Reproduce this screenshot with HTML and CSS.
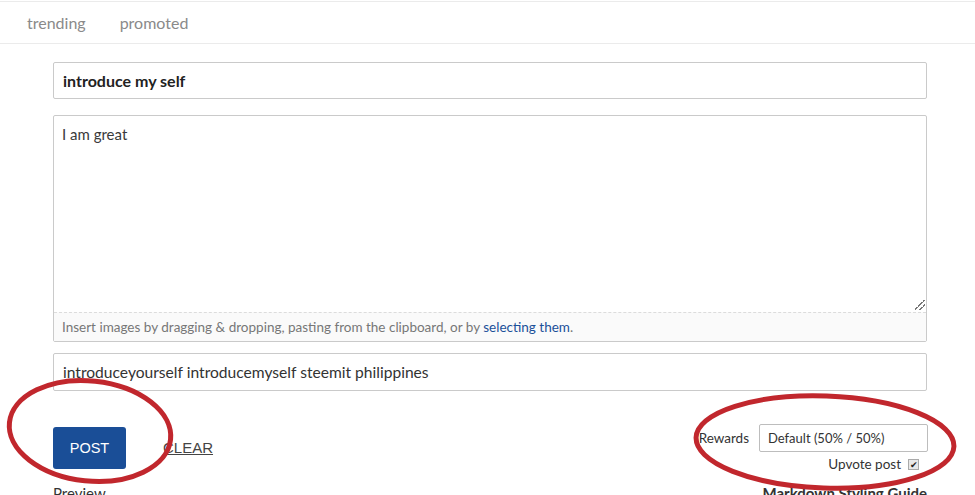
FILE: index.html
```html
<!DOCTYPE html>
<html lang="en">
  <head>
    <meta charset="UTF-8" />
    <title>Submit a story</title>
    <link rel="stylesheet" href="styles.css">
  </head>
  <body>
    <div class="topbar">
      <a class="navLink" href="#">trending</a>
      <a class="navLink" href="#">promoted</a>
    </div>

    <div class="editor">
      <div class="field titleField">introduce my self</div>

      <div class="bodyBox">
        <div class="bodyText">I am great</div>
        <div class="resizer"></div>
        <div class="hint">
          <p>Insert images by dragging &amp; dropping, pasting from the clipboard, or by <a href="#">selecting them</a>.</p>
        </div>
      </div>

      <div class="field tagField">introduceyourself introducemyself steemit philippines</div>

      <div class="actions">
        <div class="leftActions">
          <button class="postBtn">POST</button>
          <a class="clearLink" href="#">CLEAR</a>
        </div>
        <div class="rightActions">
          <div class="rewardsRow">
            <span class="rewardsLabel">Rewards</span>
            <div class="select">Default (50% / 50%)</div>
          </div>
          <div class="upvoteRow">
            Upvote post <span class="checkbox">&#10004;</span>
          </div>
        </div>
      </div>

      <div class="footRow">
        <span>Preview</span>
        <a class="guide" href="#">Markdown Styling Guide</a>
      </div>
    </div>

    <svg class="marks" width="975" height="495" viewBox="0 0 975 495">
      <ellipse cx="90" cy="431" rx="81" ry="50" transform="rotate(6 90 431)" />
      <ellipse cx="825" cy="442" rx="129" ry="46" transform="rotate(2 825 442)" />
    </svg>
  </body>
</html>
```

FILE: styles.css
```css
* {
  margin: 0px;
  padding: 0px;
  box-sizing: border-box;
}
body {
  font-family: Lato, "Liberation Sans", sans-serif;
  color: #333;
  background: #fff;
  width: 975px;
  height: 495px;
  overflow: hidden;
  position: relative;
}
a {
  text-decoration: none;
}

.topbar {
  margin-top: 1px;
  height: 43px;
  border-top: 1px solid #ebebeb;
  border-bottom: 1px solid #ebebeb;
  display: flex;
  align-items: center;
  padding-left: 27px;
  gap: 34px;
}
.navLink {
  color: #8a8a8a;
  font-size: 16px;
}

.editor {
  padding: 18px 48px 0 53px;
}
.field {
  height: 37px;
  border: 1px solid #cacaca;
  border-radius: 2px;
  padding-left: 9px;
  display: flex;
  align-items: center;
  font-size: 15px;
}
.titleField {
  font-weight: 700;
  font-size: 16px;
  color: #222;
}

.bodyBox {
  margin-top: 16px;
  border: 1px solid #cacaca;
  border-radius: 2px;
  position: relative;
}
.bodyText {
  height: 196px;
  padding: 9px 8px;
  font-size: 15px;
  color: #3a3a3a;
}
.resizer {
  position: absolute;
  right: 1px;
  top: 184px;
  width: 10px;
  height: 10px;
  background: linear-gradient(135deg, transparent 45%, #777 45%, #777 52%, transparent 52%, transparent 70%, #777 70%, #777 77%, transparent 77%);
}
.hint {
  border-top: 1px dashed #dcdcdc;
  background: #fafafa;
  height: 29px;
  padding-left: 8px;
  font-size: 13.5px;
  color: #777;
  display: flex;
  align-items: center;
}
.hint a {
  color: #1a5099;
}

.tagField {
  margin-top: 11px;
  height: 38px;
  font-size: 15.6px;
  color: #333;
}

.actions {
  display: flex;
  justify-content: space-between;
  margin-top: 32px;
}
.leftActions {
  display: flex;
  align-items: center;
  gap: 37px;
}
.postBtn {
  width: 73px;
  height: 42px;
  background: #1a4e97;
  color: white;
  border: none;
  border-radius: 3px;
  font-family: "Liberation Sans", sans-serif;
  font-size: 14.5px;
  cursor: pointer;
}
.clearLink {
  color: #444;
  font-family: "Liberation Sans", sans-serif;
  font-size: 15px;
  text-decoration: underline;
}
.rightActions {
  display: flex;
  flex-direction: column;
  align-items: flex-end;
  margin-top: 1px;
  margin-right: -1px;
}
.rewardsRow {
  display: flex;
  align-items: center;
  gap: 10px;
}
.rewardsLabel {
  font-size: 13.5px;
  color: #333;
}
.select {
  width: 169px;
  height: 28px;
  border: 1px solid #bdbdbd;
  border-radius: 2px;
  padding-left: 8px;
  font-size: 13px;
  display: flex;
  align-items: center;
}
.upvoteRow {
  margin-top: 4px;
  margin-right: 9px;
  font-size: 13.5px;
  display: flex;
  align-items: center;
  gap: 7px;
}
.checkbox {
  width: 11px;
  height: 11px;
  border: 1px solid #aaa;
  background: #e8e8e8;
  font-size: 9px;
  line-height: 9px;
  text-align: center;
  color: #222;
}

.footRow {
  display: flex;
  justify-content: space-between;
  margin-top: 12px;
  font-size: 15px;
}
.guide {
  color: #333;
  font-weight: 700;
}

.marks {
  position: absolute;
  left: 0;
  top: 0;
  pointer-events: none;
}
.marks ellipse {
  fill: none;
  stroke: #c1272d;
  stroke-width: 5;
}
```
